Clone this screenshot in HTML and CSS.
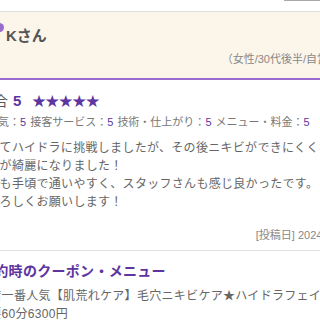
FILE: index.html
```html
<!DOCTYPE html>
<html lang="ja">

<head>
    <meta charset="UTF-8">
    <meta name="viewport" content="width=device-width, initial-scale=1.0">
    <title>口コミ - Kさん</title>
    <link rel="stylesheet" href="styles.css">
</head>

<body>
    <div class="page">

        <!-- top strip -->
        <div class="topbar"><span class="tab"></span></div>

        <!-- reviewer header -->
        <div class="reviewer">
            <div class="name-row">
                <span class="dot"></span>
                <span class="name">Kさん</span>
            </div>
            <div class="profile">（女性/30代後半/自営業）</div>
        </div>

        <!-- rating -->
        <div class="rating">
            <span class="label">総合</span>
            <span class="score">5</span>
            <span class="stars">★★★★★</span>
        </div>
        <div class="sub-ratings">
            <span class="item">雰囲気：<b>5</b></span>
            <span class="item">接客サービス：<b>5</b></span>
            <span class="item">技術・仕上がり：<b>5</b></span>
            <span class="item">メニュー・料金：<b>5</b></span>
        </div>

        <p class="comment">
            初めてハイドラに挑戦しましたが、その後ニキビができにくくなりました。<br>
            お肌が綺麗になりました！<br>
            料金も手頃で通いやすく、スタッフさんも感じ良かったです。<br>
            ☆よろしくお願いします！
        </p>

        <div class="posted">[投稿日] 2024/03/15</div>

        <div class="coupon">
            <h3>予約時のクーポン・メニュー</h3>
            <p>当店一番人気【肌荒れケア】毛穴ニキビケア★ハイドラフェイシャル<br>所要60分6300円</p>
        </div>

    </div>
</body>

</html>
```

FILE: styles.css
```css
body {
    margin: 0;
    padding: 0;
    background: #fff;
    overflow: hidden;
    font-family: 'Liberation Sans', 'Noto Sans CJK JP', sans-serif;
    color: #666;
}

/* the page is scrolled a little to the right */
.page {
    width: 385px;
    margin-left: -24px;
}

.topbar {
    height: 11px;
    display: flex;
}

.tab {
    width: 36px;
    height: 1px;
    margin-left: 308px;
    background: #a9a9a9;
}

.reviewer {
    background: #fcf5ea; /* Cream */
    border-top: 1px solid #dedede;
    border-bottom: 2px solid #9a6bcf; /* Soft Purple */
    padding: 11px 11px 12px 19px;
}

.name-row {
    display: flex;
    align-items: flex-start;
    gap: 2px;
}

.dot {
    width: 9px;
    height: 9px;
    border-radius: 50%;
    background: #9a6bcf;
}

.name {
    font-size: 15px;
    font-weight: bold;
    line-height: 26px;
    color: #555;
}

.profile {
    margin-top: 3px;
    text-align: right;
    font-size: 11px;
    line-height: 14px;
    color: #888;
}

.rating {
    margin-top: 11px;
    padding-left: 4px;
    line-height: 20px;
    font-size: 14px;
    color: #555;
    white-space: nowrap;
}

.score {
    margin-left: 1px;
    font-size: 15px;
    font-weight: bold;
    color: #5e35a0; /* Deep Purple */
}

.stars {
    margin-left: 7px;
    font-size: 13.5px;
    color: #5e35a0;
}

.sub-ratings {
    margin-top: 3px;
    font-size: 11px;
    line-height: 14px;
    color: #777;
    white-space: nowrap;
}

.sub-ratings b {
    font-weight: normal;
    color: #5e35a0;
}

.item {
    margin-right: 1px;
}

.comment {
    margin: 10px 0 0 -1px;
    font-size: 12px;
    letter-spacing: 0.3px;
    line-height: 18px;
    white-space: nowrap;
}

.posted {
    margin-top: 17px;
    padding-right: 8px;
    text-align: right;
    font-size: 11px;
    line-height: 14px;
    color: #888;
}

.coupon {
    margin-top: 8px;
    border-top: 1px solid #e0e0e0;
    padding-left: 4px;
}

.coupon h3 {
    margin: 10px 0 0;
    font-size: 14px;
    letter-spacing: 0.3px;
    line-height: 20px;
    color: #5e35a0;
    white-space: nowrap;
}

.coupon p {
    margin: 6px 0 0 -3px;
    font-size: 12px;
    letter-spacing: 0.3px;
    line-height: 18px;
    white-space: nowrap;
}
```
